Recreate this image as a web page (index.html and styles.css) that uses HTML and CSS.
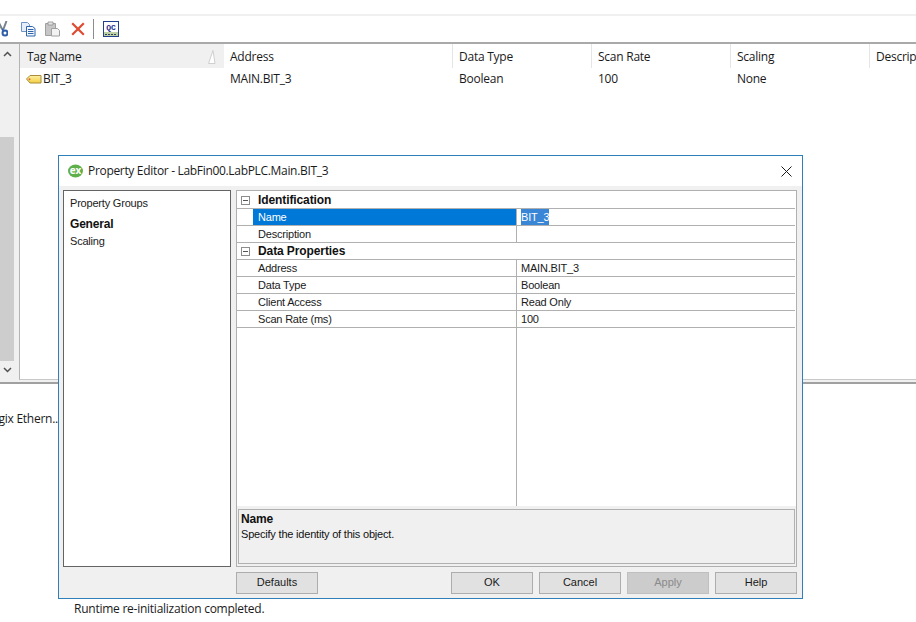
FILE: index.html
```html
<!DOCTYPE html>
<html lang="en">
<head>
<meta charset="utf-8">
<title>Property Editor</title>
<link rel="stylesheet" href="styles.css">
</head>
<body>
<div class="app">
  <div class="top-blank"></div>
  <div class="toolbar">
    <svg class="ic ic-cut" width="8" height="16" viewBox="8 0 8 16"><path d="M6 0l4 8M14.500 0l-3 8" stroke="#76828e" stroke-width="2" fill="none"/><circle cx="13" cy="12" r="2.500" fill="none" stroke="#2f5fa8" stroke-width="2"/><path d="M10 8l2 2" stroke="#2f5fa8" stroke-width="2"/></svg>
    <svg class="ic ic-copy" width="16" height="16" viewBox="0 0 16 16"><path d="M1.500 1.500h6l2 2v7h-8z" fill="#e6eefa" stroke="#6f93c6"/><path d="M6.500 5.500h6l2.500 2v7.500h-8.500z" fill="#f4f8fd" stroke="#2f64ad"/><path d="M8 8.500h5.500M8 10.500h5.500M8 12.500h5.500" stroke="#2f64ad"/></svg>
    <svg class="ic ic-paste" width="17" height="16" viewBox="0 0 17 16"><path d="M1.500 2.500h10v12h-10z" fill="#c6c6c6" stroke="#a0a0a0"/><path d="M4 1h5v3H4z" fill="#e4e4e4" stroke="#8f8f8f" stroke-width=".8"/><path d="M7.500 7.500h6l2 2v5.500h-8z" fill="#f3f3f3" stroke="#a0a0a0"/></svg>
    <svg class="ic ic-del" width="14" height="14" viewBox="0 0 14 14"><path d="M1.200 1.200l11.600 11.600M12.800 1.200l-11.600 11.600" stroke="#df4a30" stroke-width="2.200" fill="none"/></svg>
    <div class="tool-sep"></div>
    <svg class="ic ic-qc" width="16" height="16" viewBox="0 0 16 16"><rect x=".5" y=".5" width="15" height="15" fill="#fff" stroke="#23408f"/><rect x="1" y="11" width="14" height="4" fill="#bcd0a6"/><path d="M2 13.500h12" stroke="#33415f" stroke-dasharray="2 1"/><text class="qc-text" x="8" y="9.300" text-anchor="middle">QC</text></svg>
  </div>
  <div class="rule"></div>
  <div class="main">
    <div class="scrollbar">
      <div class="sb-btn"><svg width="9" height="6" viewBox="0 0 9 6"><path d="M1 5l3.500-3.500L8 5" fill="none" stroke="#505050" stroke-width="1.500"/></svg></div>
      <div class="sb-track"></div>
      <div class="sb-thumb"></div>
      <div class="sb-btn"><svg width="9" height="6" viewBox="0 0 9 6"><path d="M1 1l3.500 3.500L8 1" fill="none" stroke="#505050" stroke-width="1.500"/></svg></div>
    </div>
    <div class="table">
      <div class="t-row t-head">
        <div class="t-cell t-sorted"><span>Tag Name</span><svg class="sort" width="8" height="14" viewBox="0 0 8 14"><path d="M.5 13.500L5 .5l2 13z" fill="#fff" stroke="#cfcfcf"/></svg></div>
        <div class="t-cell">Address</div>
        <div class="t-cell">Data Type</div>
        <div class="t-cell">Scan Rate</div>
        <div class="t-cell">Scaling</div>
        <div class="t-cell t-last">Description</div>
      </div>
      <div class="t-row t-body">
        <div class="t-cell t-tag"><svg width="16" height="10" viewBox="0 0 16 10"><defs><linearGradient id="tagfill" x1="0" y1="0" x2="0" y2="1"><stop offset="0" stop-color="#fdf0a8"/><stop offset="1" stop-color="#f3cf3e"/></linearGradient></defs><path d="M.5 5L4 1.500h11v7.500H4z" fill="url(#tagfill)" stroke="#a98d3a"/><circle cx="3.500" cy="5.300" r="1" fill="#d86a3a"/></svg><span>BIT_3</span></div>
        <div class="t-cell">MAIN.BIT_3</div>
        <div class="t-cell">Boolean</div>
        <div class="t-cell">100</div>
        <div class="t-cell">None</div>
        <div class="t-cell t-last"></div>
      </div>
    </div>
  </div>
  <div class="splitter"></div>
  <div class="bottom">
    <div class="tree"><span>ControlLogix Ethern..</span></div>
    <div class="log">Runtime re-initialization completed.</div>
  </div>
</div>

<div class="dialog">
  <div class="d-title">
    <svg class="d-logo" width="15" height="14" viewBox="0 0 15 14"><ellipse cx="7.500" cy="7" rx="7.500" ry="6.500" fill="#5fb04a"/><text class="logo-text" x="7.500" y="10" text-anchor="middle">ex</text></svg>
    <span class="d-caption">Property Editor - LabFin00.LabPLC.Main.BIT_3</span>
    <svg class="d-close" width="11" height="11" viewBox="0 0 11 11"><path d="M.5.500l10 10M10.500.500l-10 10" stroke="#1a1a1a" fill="none"/></svg>
  </div>
  <div class="d-body">
    <div class="d-panes">
      <div class="groups">
        <div class="g-head">Property Groups</div>
        <div class="g-item g-active">General</div>
        <div class="g-item">Scaling</div>
      </div>
      <div class="props">
        <div class="grid">
          <div class="sec"><span class="box"></span><b>Identification</b></div>
          <div class="row"><div class="k k-sel">Name</div><div class="v"><span class="sel">BIT_3</span></div></div>
          <div class="row"><div class="k">Description</div><div class="v"></div></div>
          <div class="sec"><span class="box"></span><b>Data Properties</b></div>
          <div class="row"><div class="k">Address</div><div class="v">MAIN.BIT_3</div></div>
          <div class="row"><div class="k">Data Type</div><div class="v">Boolean</div></div>
          <div class="row"><div class="k">Client Access</div><div class="v">Read Only</div></div>
          <div class="row"><div class="k">Scan Rate (ms)</div><div class="v">100</div></div>
          <div class="filler"><div class="f-l"></div><div class="f-r"></div></div>
        </div>
        <div class="help">
          <b>Name</b>
          <span>Specify the identity of this object.</span>
        </div>
      </div>
    </div>
    <div class="d-btns">
      <button class="btn" type="button">Defaults</button>
      <div class="btn-spacer"></div>
      <button class="btn" type="button">OK</button>
      <button class="btn" type="button">Cancel</button>
      <button class="btn btn-off" type="button">Apply</button>
      <button class="btn" type="button">Help</button>
    </div>
  </div>
</div>
</body>
</html>
```

FILE: styles.css
```css
* { box-sizing: border-box; }
html, body { margin: 0; padding: 0; }
body {
  width: 916px; height: 622px; overflow: hidden; position: relative;
  background: #fff; color: #1a1a1a;
  font: 12px/16px "Open Sans", "Noto Sans", sans-serif;
  letter-spacing: -0.25px;
}
.app { display: flex; flex-direction: column; height: 622px; }
.top-blank { height: 14px; }
.toolbar {
  height: 28px; border-top: 2px solid #f0f0f0; display: flex; align-items: center;
}
.ic { display: block; flex: none; }
.ic-cut { margin-right: 12px; }
.ic-copy { margin-right: 8px; }
.ic-paste { margin-right: 10px; }
.ic-del { margin-right: 8px; }
.tool-sep { width: 1px; height: 20px; background: #8c8c8c; margin-right: 9px; }
.qc-text { font: bold 8px "Liberation Mono", monospace; fill: #1f2f8f; letter-spacing: 0; }
.rule { height: 2px; background: #a9a9a9; }
.main { height: 336px; display: flex; background: #f0f0f0; }
.scrollbar { width: 14px; display: flex; flex-direction: column; flex: none; margin-bottom: 2px; }
.sb-btn { height: 17px; display: flex; align-items: center; justify-content: center; flex: none; }
.sb-btn:first-child { height: 20px; }
.sb-track { height: 73px; flex: none; }
.sb-thumb { flex: 1; background: #cdcdcd; }
.table {
  margin-left: 5px; flex: 1; min-width: 0; background: #fff; overflow: hidden;
  border-left: 1px solid #b4b4b4; border-bottom: 1px solid #c8c8c8;
}
.t-row { display: grid; grid-template-columns: 204px 229px 139px 139px 139px 46px; }
.t-head { height: 24px; }
.t-body { height: 22px; }
.t-cell { padding-left: 6px; white-space: nowrap; overflow: hidden; display: flex; align-items: center; }
.t-head .t-cell { border-right: 1px solid #e5e5e5; padding-top: 2px; }
.t-head .t-last { border-right: 0; }
.t-head .t-cell.t-sorted { background: #f0f0f0; border-right: 0; padding-left: 7px; justify-content: space-between; padding-right: 8px; }
.t-tag { gap: 1px; }
.sort { margin-top: -1px; }
.splitter { height: 4px; background: #f0f0f0; border-bottom: 2px solid #a0a0a0; }
.bottom { flex: 1; display: flex; min-height: 0; }
.tree { width: 58px; flex: none; overflow: hidden; display: flex; justify-content: flex-end; padding-top: 27px; white-space: nowrap; }
.tree span { flex: none; height: 16px; }
.log { flex: 1; display: flex; align-items: flex-end; padding-left: 16px; padding-bottom: 5px; }

.dialog {
  position: absolute; left: 58px; top: 155px; width: 745px; height: 444px;
  border: 1px solid #2f80b8; background: #f0f0f0; display: flex; flex-direction: column;
}
.d-title { height: 30px; background: #fff; display: flex; align-items: center; padding: 0 10px 0 9px; flex: none; }
.d-logo { flex: none; margin-right: 5px; }
.logo-text { font: bold 10px "Open Sans", sans-serif; fill: #fff; letter-spacing: 0; }
.d-caption { flex: 1; letter-spacing: -0.32px; }
.d-close { flex: none; }
.d-body {
  flex: 1; display: flex; flex-direction: column; padding: 4px 5px 5px 4px; min-height: 0;
  font: 11px/16px "Liberation Sans", Arial, sans-serif; letter-spacing: -0.2px;
}
.d-panes { display: flex; gap: 5px; height: 377px; flex: none; }
.groups { width: 168px; background: #fff; border: 1px solid #646464; padding: 5px 6px; flex: none; }
.g-head { height: 18px; line-height: 14px; margin-bottom: 2px; }
.g-item { height: 17px; line-height: 16px; }
.g-active { font-weight: 700; font-size: 12px; color: #111; }
.props { flex: 1; border: 1px solid #b0b0b0; display: flex; flex-direction: column; min-width: 0; }
.grid { height: 315px; background: #fff; display: flex; flex-direction: column; padding: 1px 1px 0 0; flex: none; }
.sec { height: 17px; display: flex; align-items: center; border-bottom: 1px solid #b0b0b0; flex: none; padding-left: 4px; color: #111; font-size: 12px; letter-spacing: -0.1px; }
.sec b { margin-left: 8px; }
.box { width: 9px; height: 9px; border: 1px solid #8c8c8c; position: relative; background: #fff; flex: none; }
.box::after { content: ""; position: absolute; left: 1px; right: 1px; top: 3px; height: 1px; background: #555; }
.row { height: 17px; display: flex; border-bottom: 1px solid #b0b0b0; flex: none; padding-left: 16px; }
.k { width: 264px; padding-left: 5px; line-height: 16px; flex: none; border-right: 1px solid #b0b0b0; }
.k-sel { background: #0078d7; color: #fff; }
.v { flex: 1; padding-left: 4px; line-height: 16px; white-space: nowrap; }
.sel { background: #3a86d6; color: #fff; display: inline-block; }
.filler { flex: 1; display: flex; padding-left: 16px; }
.f-l { width: 264px; border-right: 1px solid #b0b0b0; }
.help {
  flex: 1; margin: 3px 1px 2px 1px; border: 1px solid #b0b0b0; padding: 2px 2px;
  display: flex; flex-direction: column; color: #111; line-height: 15px;
}
.help b { font-size: 12px; }
.d-btns { display: flex; gap: 6px; padding: 5px 0 0 173px; }
.btn {
  width: 82px; height: 22px; padding: 0 0 2px; margin: 0; border: 1px solid #adadad; background: #e1e1e1;
  font: inherit; letter-spacing: 0; color: #1a1a1a; flex: none;
}
.btn-off { background: #cccccc; color: #8a8a8a; border-color: #bfbfbf; }
.btn-spacer { width: 121px; flex: none; }
```
